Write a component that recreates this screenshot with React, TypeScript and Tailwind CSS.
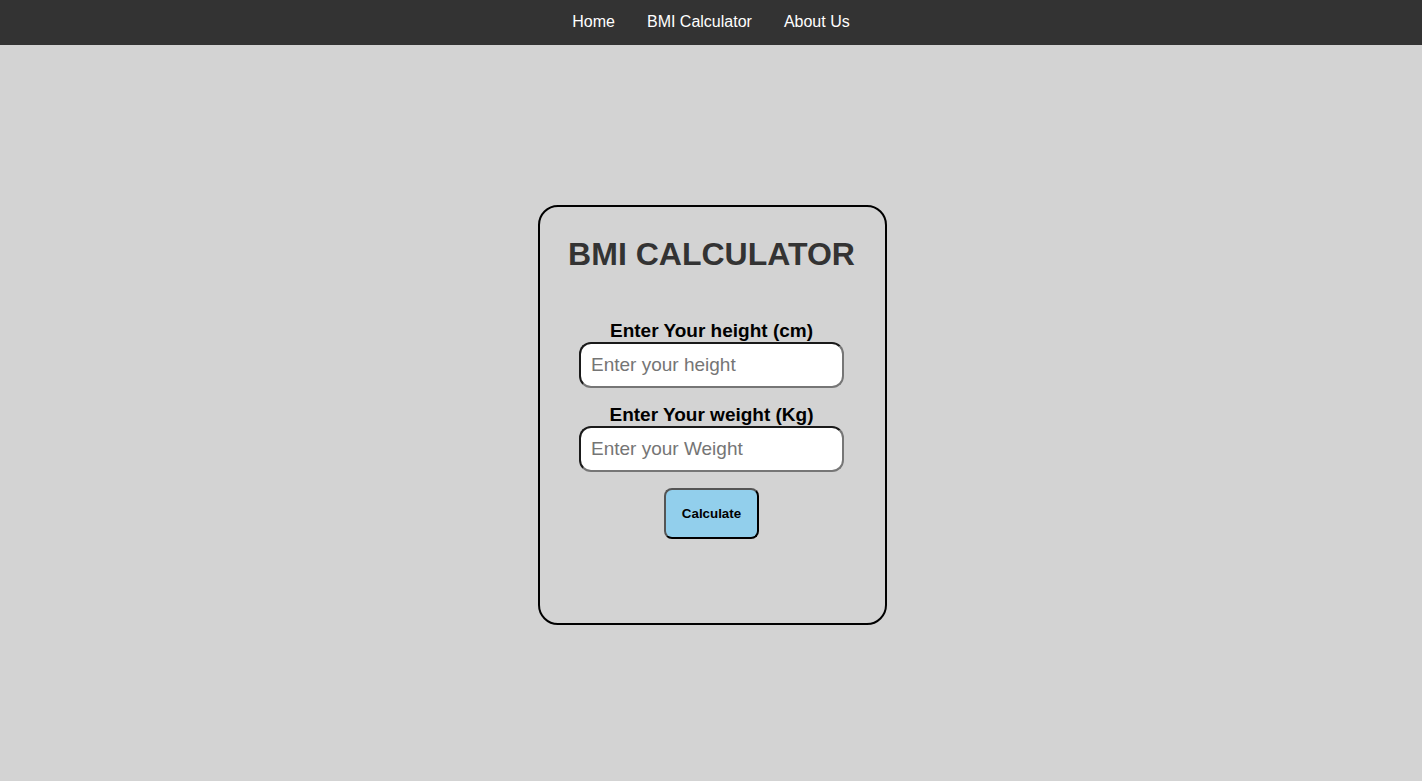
import { useState } from "react";

const navLinks = ["Home", "BMI Calculator", "About Us"];

const fieldInput =
  "w-[265px] h-[46px] rounded-[12px] border-2 border-t-[#1a1a1a] border-l-[#1a1a1a] border-r-[#767676] border-b-[#767676] bg-white px-[10px] text-[19px] text-black outline-none placeholder:text-[#757575]";

export default function App() {
  const [height, setHeight] = useState("");
  const [weight, setWeight] = useState("");

  return (
    <div className="min-h-[781px] bg-[#d3d3d3] font-['Liberation_Sans',Arial,sans-serif]">
      <nav className="flex h-[45px] items-center justify-center bg-[#333333] pb-[2px]">
        {navLinks.map((link) => (
          <a key={link} href="#" className="px-4 text-base text-white">
            {link}
          </a>
        ))}
      </nav>

      <main className="flex justify-center pt-[160px] pl-[3px]">
        <div className="flex h-[420px] w-[349px] flex-col items-center rounded-[20px] border-2 border-black pt-[29px] pr-[2px]">
          <h1 className="text-[32px] leading-[37px] font-bold text-[#333333]">
            BMI CALCULATOR
          </h1>

          <div className="mt-[47px] flex flex-col items-center">
            <label className="text-[19px] leading-[22px] font-bold text-black">
              Enter Your height (cm)
            </label>
            <input
              className={fieldInput}
              placeholder="Enter your height"
              value={height}
              onChange={(e) => setHeight(e.target.value)}
            />

            <label className="mt-[16px] text-[19px] leading-[22px] font-bold text-black">
              Enter Your weight (Kg)
            </label>
            <input
              className={fieldInput}
              placeholder="Enter your Weight"
              value={weight}
              onChange={(e) => setWeight(e.target.value)}
            />

            <button className="mt-[16px] h-[51px] w-[95px] rounded-[8px] border-2 border-t-[#555555] border-l-[#555555] border-r-black border-b-black bg-[#92cfec] text-[13.33px] font-bold text-black">
              Calculate
            </button>
          </div>
        </div>
      </main>
    </div>
  );
}
